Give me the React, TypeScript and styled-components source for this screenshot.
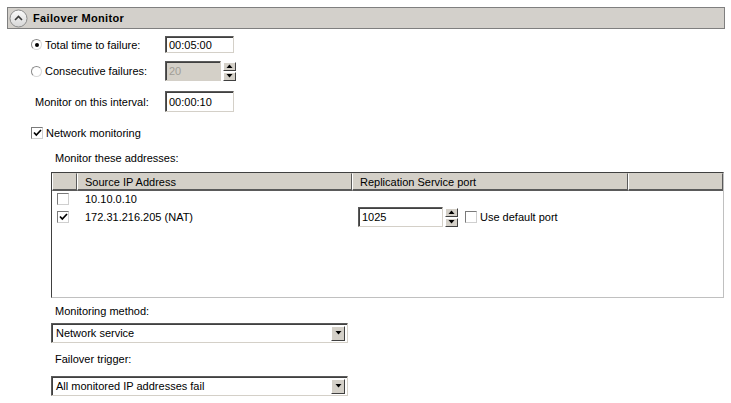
import React from "react";
import styled, { createGlobalStyle } from "styled-components";

const Global = createGlobalStyle`
  html, body { margin: 0; padding: 0; background: #ffffff; }
  body { font-family: "Liberation Sans", Arial, sans-serif; font-size: 11px; color: #000; }
  * { box-sizing: border-box; }
`;

const Page = styled.div`
  width: 731px;
  height: 403px;
  padding: 7px 6px 0 7px;
  overflow: hidden;
`;

const Header = styled.div`
  height: 22px;
  width: 718px;
  background: #d3d0cb;
  border: 1px solid #7f7f7f;
  display: flex;
  align-items: center;
  padding-left: 1px;
  gap: 5px;
`;

const Title = styled.span`
  font-weight: bold;
  font-size: 11px;
  letter-spacing: 0.35px;
`;

const Body = styled.div`
  display: flex;
  flex-direction: column;
`;

const FieldRow = styled.div<{ $top: number; $h: number; $indent: number }>`
  display: flex;
  align-items: center;
  margin-top: ${(p) => p.$top}px;
  height: ${(p) => p.$h}px;
  padding-left: ${(p) => p.$indent}px;
`;

const LabelCell = styled.label<{ $w: number }>`
  display: flex;
  align-items: center;
  width: ${(p) => p.$w}px;
  gap: 3px;
  white-space: nowrap;
`;

const Radio = styled.span<{ $on?: boolean }>`
  width: 11px;
  height: 11px;
  border-radius: 50%;
  border: 1px solid #8a8a8a;
  border-right-color: #d8d8d8;
  border-bottom-color: #d8d8d8;
  background: #fff;
  display: inline-flex;
  align-items: center;
  justify-content: center;
  &::after {
    content: "";
    width: 4px;
    height: 4px;
    border-radius: 50%;
    background: ${(p) => (p.$on ? "#000" : "transparent")};
  }
`;

const Box = styled.span`
  width: 12px;
  height: 12px;
  border: 1px solid #7a7a7a;
  border-right-color: #cfcfcf;
  border-bottom-color: #cfcfcf;
  background: #fff;
  display: inline-flex;
  align-items: center;
  justify-content: center;
  flex: none;
`;

const TextInput = styled.div<{ $w: number; $h: number; $disabled?: boolean }>`
  width: ${(p) => p.$w}px;
  height: ${(p) => p.$h}px;
  border-top: 1px solid #5a5a5a;
  border-left: 1px solid #5a5a5a;
  border-right: 1px solid #d4d0c8;
  border-bottom: 1px solid #d4d0c8;
  box-shadow: inset 1px 1px 0 #404040;
  background: ${(p) => (p.$disabled ? "#d4d0c8" : "#fff")};
  color: ${(p) => (p.$disabled ? "#a09d96" : "#000")};
  display: flex;
  align-items: center;
  padding-left: 3px;
  flex: none;
`;

const Spin = styled.div<{ $h: number }>`
  display: flex;
  flex-direction: column;
  width: 13px;
  height: ${(p) => p.$h}px;
  margin-left: 2px;
  gap: 1px;
  flex: none;
  justify-content: center;
`;

const SpinBtn = styled.div`
  flex: 1;
  max-height: 9px;
  background: #d4d0c8;
  border: 1px solid #fff;
  border-right-color: #404040;
  border-bottom-color: #404040;
  display: flex;
  align-items: center;
  justify-content: center;
`;

const Section = styled.div`
  padding-left: 44px;
  display: flex;
  flex-direction: column;
`;

const Caption = styled.div<{ $top: number }>`
  margin-top: ${(p) => p.$top}px;
  height: 13px;
  line-height: 13px;
  padding-left: 4px;
`;

const List = styled.div`
  margin-top: 7px;
  width: 673px;
  height: 126px;
  border-top: 1px solid #404040;
  border-left: 1px solid #404040;
  border-right: 1px solid #c0c0c0;
  border-bottom: 1px solid #c0c0c0;
  background: #fff;
  display: flex;
  flex-direction: column;
`;

const GridRow = styled.div<{ $h: number }>`
  display: grid;
  grid-template-columns: 25px 275px 276px 95px;
  height: ${(p) => p.$h}px;
  align-items: center;
`;

const HeadCell = styled.div`
  height: 100%;
  background: #d4d0c8;
  border-top: 1px solid #d4d0c8;
  border-bottom: 2px solid #5a5a5a;
  border-right: 1px solid #5a5a5a;
  border-left: 1px solid #fff;
  display: flex;
  align-items: center;
  padding-left: 7px;
  white-space: nowrap;
`;

const Cell = styled.div<{ $pad: number }>`
  display: flex;
  align-items: center;
  padding-left: ${(p) => p.$pad}px;
  white-space: nowrap;
`;

const Select = styled.div<{ $top: number }>`
  margin-top: ${(p) => p.$top}px;
  width: 297px;
  height: 20px;
  border-top: 1px solid #5a5a5a;
  border-left: 1px solid #5a5a5a;
  border-right: 1px solid #d4d0c8;
  border-bottom: 1px solid #d4d0c8;
  box-shadow: inset 1px 1px 0 #404040;
  background: #fff;
  display: flex;
  align-items: center;
  padding-left: 4px;
  padding-right: 2px;
  justify-content: space-between;
`;

const DropBtn = styled.div`
  width: 14px;
  height: 15px;
  background: #d4d0c8;
  border: 1px solid #fff;
  border-right-color: #404040;
  border-bottom-color: #404040;
  display: flex;
  align-items: center;
  justify-content: center;
`;

const Tri = ({ up }: { up?: boolean }) => (
  <svg width="7" height="4" viewBox="0 0 7 4">
    <path d={up ? "M0.5 4 L3.5 0.5 L6.5 4 Z" : "M0.5 0 L3.5 3.5 L6.5 0 Z"} fill="#000" />
  </svg>
);

const Check = () => (
  <svg width="9" height="8" viewBox="0 0 9 8">
    <path d="M1 3.5 L3.3 6 L8 1" stroke="#000" strokeWidth="1.7" fill="none" />
  </svg>
);

const CollapseIcon = () => (
  <svg width="19" height="19" viewBox="0 0 19 19">
    <defs>
      <linearGradient id="cg" x1="0" y1="0" x2="0" y2="1">
        <stop offset="0" stopColor="#fbfbfb" />
        <stop offset="1" stopColor="#d6d6d6" />
      </linearGradient>
    </defs>
    <circle cx="9.5" cy="9.5" r="8.5" fill="url(#cg)" stroke="#8c8c8c" />
    <path d="M6 11 L9.5 7.5 L13 11" stroke="#3a3a3a" strokeWidth="1.6" fill="none" />
  </svg>
);

const SpinBox = ({ h }: { h: number }) => (
  <Spin $h={h}>
    <SpinBtn>
      <Tri up />
    </SpinBtn>
    <SpinBtn>
      <Tri />
    </SpinBtn>
  </Spin>
);

export default function App() {
  return (
    <>
      <Global />
      <Page>
        <Header>
          <CollapseIcon />
          <Title>Failover Monitor</Title>
        </Header>
        <Body>
          <FieldRow $top={7} $h={17} $indent={24}>
            <LabelCell $w={134}>
              <Radio $on />
              Total time to failure:
            </LabelCell>
            <TextInput $w={69} $h={17}>00:05:00</TextInput>
          </FieldRow>
          <FieldRow $top={8} $h={20} $indent={24}>
            <LabelCell $w={134}>
              <Radio />
              Consecutive failures:
            </LabelCell>
            <TextInput $w={56} $h={20} $disabled>20</TextInput>
            <SpinBox h={20} />
          </FieldRow>
          <FieldRow $top={10} $h={21} $indent={28}>
            <LabelCell $w={130}>Monitor on this interval:</LabelCell>
            <TextInput $w={69} $h={21}>00:00:10</TextInput>
          </FieldRow>
          <FieldRow $top={15} $h={12} $indent={24}>
            <LabelCell $w={200}>
              <Box>
                <Check />
              </Box>
              Network monitoring
            </LabelCell>
          </FieldRow>
          <Section>
            <Caption $top={13}>Monitor these addresses:</Caption>
            <List>
              <GridRow $h={18}>
                <HeadCell />
                <HeadCell>Source IP Address</HeadCell>
                <HeadCell>Replication Service port</HeadCell>
                <HeadCell />
              </GridRow>
              <GridRow $h={15}>
                <Cell $pad={5}>
                  <Box />
                </Cell>
                <Cell $pad={8}>10.10.0.10</Cell>
              </GridRow>
              <GridRow $h={22}>
                <Cell $pad={5}>
                  <Box>
                    <Check />
                  </Box>
                </Cell>
                <Cell $pad={8}>172.31.216.205 (NAT)</Cell>
                <Cell $pad={6}>
                  <TextInput $w={85} $h={20}>1025</TextInput>
                  <SpinBox h={20} />
                  <LabelCell $w={120} style={{ marginLeft: 7 }}>
                    <Box />
                    Use default port
                  </LabelCell>
                </Cell>
              </GridRow>
            </List>
            <Caption $top={7}>Monitoring method:</Caption>
            <Select $top={5}>
              <span>Network service</span>
              <DropBtn>
                <Tri />
              </DropBtn>
            </Select>
            <Caption $top={10}>Failover trigger:</Caption>
            <Select $top={10}>
              <span>All monitored IP addresses fail</span>
              <DropBtn>
                <Tri />
              </DropBtn>
            </Select>
          </Section>
        </Body>
      </Page>
    </>
  );
}
